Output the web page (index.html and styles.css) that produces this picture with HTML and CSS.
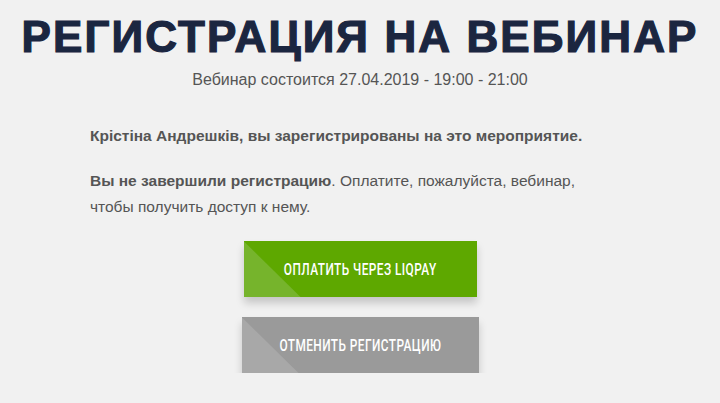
FILE: index.html
```html
<!DOCTYPE html>
<html lang="ru">
<head>
  <meta charset="UTF-8">
  <meta name="viewport" content="width=device-width, initial-scale=1.0">
  <title>Регистрация на вебинар</title>
  <link rel="stylesheet" href="styles.css">
</head>
<body>

  <div class="page">
    <h1 class="title">Регистрация на вебинар</h1>
    <p class="date">Вебинар состоится 27.04.2019 - 19:00 - 21:00</p>

    <div class="message">
      <p class="greeting">Крістіна Андрешків, вы зарегистрированы на это мероприятие.</p>
      <p class="notice"><b>Вы не завершили регистрацию</b>. Оплатите, пожалуйста, вебинар, чтобы получить доступ к нему.</p>
    </div>

    <div class="actions">
      <a href="#" class="btn btn-pay"><span class="btn-label">Оплатить через LiqPay</span></a>
      <a href="#" class="btn btn-cancel"><span class="btn-label">Отменить регистрацию</span></a>
    </div>
  </div>

</body>
</html>
```

FILE: styles.css
```css
body {
  margin: 0;
  padding: 0;
  font-family: 'Liberation Sans', Arial, sans-serif;
  background-color: #f1f1f1;
  color: #555;
}

.page {
  display: flex;
  flex-direction: column;
  align-items: center;
  padding-top: 12px;
}

.title {
  margin: 0;
  font-size: 44px;
  font-weight: bold;
  text-transform: uppercase;
  color: #1b2640;
  line-height: 50px;
  letter-spacing: 2.1px;
  -webkit-text-stroke: 1.2px #1b2640;
}

.date {
  margin: 8px 0 0;
  font-size: 16px;
  line-height: 20px;
  color: #555;
}

.message {
  width: 540px;
  margin-top: 33px;
  font-size: 15.5px;
  line-height: 26px;
}

.message p {
  margin: 0;
}

.greeting {
  font-weight: bold;
}

.notice {
  padding-top: 19px;
  width: 525px;
}

.actions {
  display: flex;
  flex-direction: column;
  align-items: center;
  gap: 20px;
  margin-top: 21px;
}

.btn {
  position: relative;
  display: flex;
  align-items: center;
  justify-content: center;
  height: 56px;
  color: #fff;
  text-decoration: none;
  box-shadow: 0 6px 8px rgba(0, 0, 0, 0.18);
  overflow: hidden;
  z-index: 0;
}

.btn-label {
  display: inline-block;
  font-family: Roboto, 'Liberation Sans', sans-serif;
  font-weight: 500;
  font-size: 16px;
  text-transform: uppercase;
  letter-spacing: 0.6px;
  white-space: nowrap;
  transform: scaleX(0.74);
}

/* lighter corner triangle */
.btn::before {
  content: "";
  position: absolute;
  left: 0;
  top: 0;
  width: 57px;
  height: 56px;
  clip-path: polygon(0 0, 100% 100%, 0 100%);
  z-index: -1;
}

.btn-pay {
  width: 233px;
  background-color: #5ea800;
}

.btn-pay::before {
  background-color: #76b42c;
}

.btn-cancel {
  width: 237px;
  background-color: #9a9a9a;
}

.btn-cancel::before {
  background-color: #a8a8a8;
}
```
